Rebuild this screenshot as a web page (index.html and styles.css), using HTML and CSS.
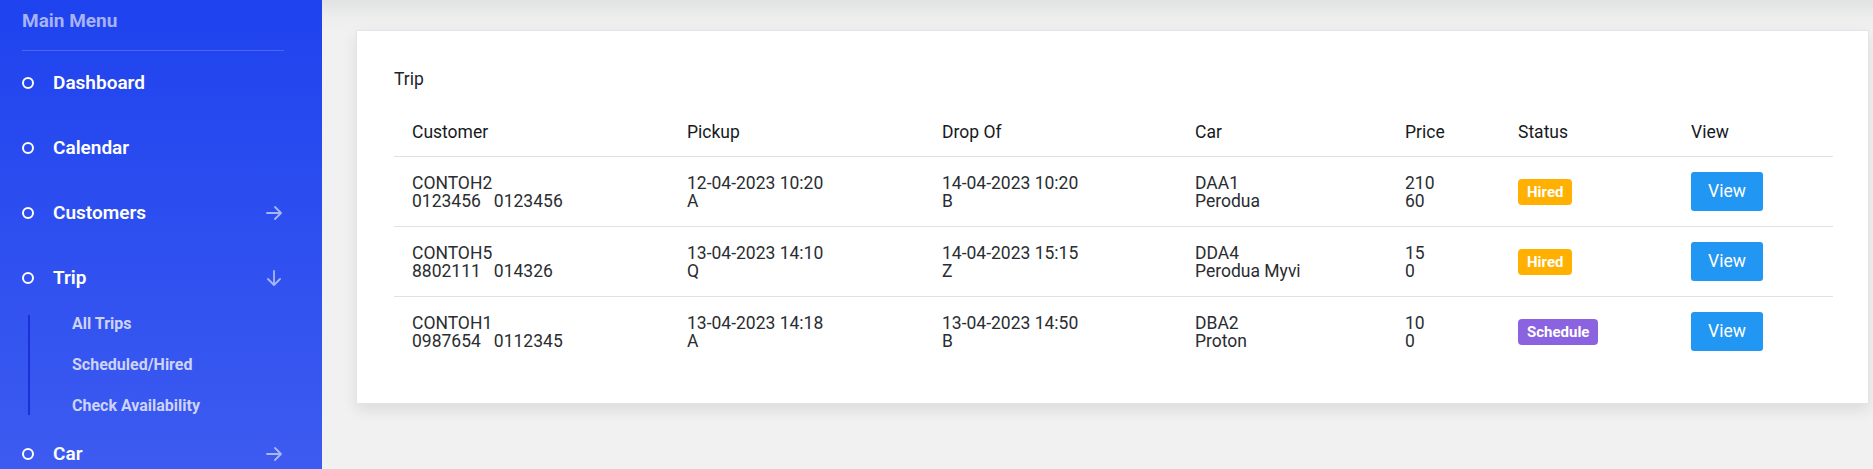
FILE: index.html
```html
<!DOCTYPE html>
<html lang="en">
<head>
<meta charset="utf-8">
<title>Trip</title>
<link rel="stylesheet" href="styles.css">
</head>
<body>
<div class="layout">
  <aside class="sidebar">
    <div class="menu-title">Main Menu</div>
    <div class="divider"></div>
    <ul class="menu">
      <li class="menu-item"><span class="ring"></span><span class="label">Dashboard</span></li>
      <li class="menu-item"><span class="ring"></span><span class="label">Calendar</span></li>
      <li class="menu-item"><span class="ring"></span><span class="label">Customers</span>
        <svg class="chev" width="16" height="16" viewBox="0 0 16 16"><path d="M1 8H15M9 2L15 8L9 14" fill="none" stroke="currentColor" stroke-width="1.8" stroke-linecap="round" stroke-linejoin="round"/></svg>
      </li>
      <li class="menu-item"><span class="ring"></span><span class="label">Trip</span>
        <svg class="chev" width="16" height="16" viewBox="0 0 16 16"><path d="M8 1V15M2 9L8 15L14 9" fill="none" stroke="currentColor" stroke-width="1.8" stroke-linecap="round" stroke-linejoin="round"/></svg>
      </li>
      <li class="submenu-wrap">
        <ul class="submenu">
          <li>All Trips</li>
          <li>Scheduled/Hired</li>
          <li>Check Availability</li>
        </ul>
      </li>
      <li class="menu-item"><span class="ring"></span><span class="label">Car</span>
        <svg class="chev" width="16" height="16" viewBox="0 0 16 16"><path d="M1 8H15M9 2L15 8L9 14" fill="none" stroke="currentColor" stroke-width="1.8" stroke-linecap="round" stroke-linejoin="round"/></svg>
      </li>
    </ul>
  </aside>
  <main class="main">
    <section class="card">
      <h2 class="card-title">Trip</h2>
      <table class="trips">
        <colgroup>
          <col class="c-customer"><col class="c-pickup"><col class="c-drop"><col class="c-car"><col class="c-price"><col class="c-status"><col class="c-view">
        </colgroup>
        <thead>
          <tr><th>Customer</th><th>Pickup</th><th>Drop Of</th><th>Car</th><th>Price</th><th>Status</th><th>View</th></tr>
        </thead>
        <tbody>
          <tr>
            <td>CONTOH2<br>0123456&nbsp;&nbsp;&nbsp;0123456</td>
            <td>12-04-2023 10:20<br>A</td>
            <td>14-04-2023 10:20<br>B</td>
            <td>DAA1<br>Perodua</td>
            <td>210<br>60</td>
            <td><span class="badge hired">Hired</span></td>
            <td><button class="btn-view">View</button></td>
          </tr>
          <tr>
            <td>CONTOH5<br>8802111&nbsp;&nbsp;&nbsp;014326</td>
            <td>13-04-2023 14:10<br>Q</td>
            <td>14-04-2023 15:15<br>Z</td>
            <td>DDA4<br>Perodua Myvi</td>
            <td>15<br>0</td>
            <td><span class="badge hired">Hired</span></td>
            <td><button class="btn-view">View</button></td>
          </tr>
          <tr>
            <td>CONTOH1<br>0987654&nbsp;&nbsp;&nbsp;0112345</td>
            <td>13-04-2023 14:18<br>A</td>
            <td>13-04-2023 14:50<br>B</td>
            <td>DBA2<br>Proton</td>
            <td>10<br>0</td>
            <td><span class="badge schedule">Schedule</span></td>
            <td><button class="btn-view">View</button></td>
          </tr>
        </tbody>
      </table>
    </section>
  </main>
</div>
</body>
</html>
```
FILE: styles.css
```css
* { box-sizing: border-box; }
html, body { margin: 0; padding: 0; }
body {
  font-family: Roboto, "Liberation Sans", Arial, sans-serif;
  color: #212529;
  background: #f1f1f1;
  height: 469px;
  overflow: hidden;
}
.layout {
  display: flex;
  height: 469px;
}
.sidebar {
  width: 322px;
  flex: 0 0 322px;
  height: 100%;
  padding: 10px 38px 0 22px;
  background: linear-gradient(180deg, #1e42ee 0%, #2c4ef0 45%, #3d5bf0 100%);
  overflow: hidden;
}
.menu-title {
  font-size: 19px;
  line-height: 22px;
  font-weight: 700;
  color: #a7b3f6;
}
.divider {
  margin-top: 18px;
  height: 1px;
  background: rgba(255, 255, 255, 0.18);
}
.menu {
  list-style: none;
  margin: -1px 0 0;
  padding: 0;
}
.menu-item {
  display: flex;
  align-items: center;
  height: 65px;
  color: #ffffff;
}
.ring {
  width: 12px;
  height: 12px;
  border: 2px solid #ffffff;
  border-radius: 50%;
  flex: 0 0 12px;
}
.label {
  margin-left: 19px;
  font-size: 19px;
  line-height: 22px;
  font-weight: 600;
  flex: 1;
}
.chev {
  color: #a9b6f5;
  margin-right: 2px;
}
.submenu-wrap {
  padding: 5px 0 6px;
}
.submenu {
  list-style: none;
  margin: 0 0 0 6px;
  padding: 0 0 0 42px;
  border-left: 2px solid #1a31d8;
  display: flex;
  flex-direction: column;
  gap: 23px;
}
.submenu li {
  font-size: 16px;
  line-height: 18px;
  font-weight: 700;
  color: #cdd3fa;
}
.main {
  flex: 1;
  padding: 30px 4px 0 34px;
  background: linear-gradient(180deg, #e1e2e3 0px, #eeeeee 18px, #f1f1f1 34px, #f1f1f1 100%);
}
.card {
  background: #ffffff;
  border: 1px solid #dfe5ec;
  box-shadow: 0 6px 14px rgba(0, 0, 0, 0.09);
  padding: 39px 35px 37px 37px;
}
.card-title {
  margin: 0 0 20px;
  font-size: 17.5px;
  line-height: 18px;
  font-weight: 400;
  color: #212529;
}
.trips {
  width: 100%;
  border-collapse: collapse;
  table-layout: fixed;
  font-size: 17.5px;
}
.c-customer { width: 275px; }
.c-pickup { width: 255px; }
.c-drop { width: 253px; }
.c-car { width: 210px; }
.c-price { width: 113px; }
.c-status { width: 173px; }
.c-view { width: 160px; }
.trips th {
  text-align: left;
  font-weight: 400;
  line-height: 18px;
  padding: 15px 18px;
  border-bottom: 1px solid #dee2e6;
  color: #161a1e;
}
.trips td {
  vertical-align: middle;
  line-height: 18px;
  padding: 15px 18px;
  border-bottom: 1px solid #dee2e6;
  color: #2a2d31;
  white-space: nowrap;
}
.trips tbody tr:last-child td { border-bottom: none; }
.badge {
  display: inline-block;
  padding: 4px 9px;
  font-size: 15px;
  line-height: 18px;
  font-weight: 700;
  color: #ffffff;
  border-radius: 4px;
}
.badge.hired { background: #ffb000; }
.badge.schedule { background: #8b63e0; }
.btn-view {
  display: inline-block;
  border: none;
  border-radius: 3px;
  background: #2196f3;
  color: #ffffff;
  font-family: Roboto, "Liberation Sans", Arial, sans-serif;
  font-size: 17.5px;
  line-height: 21px;
  padding: 9px 0;
  width: 72px;
  text-align: center;
  cursor: pointer;
}
```
